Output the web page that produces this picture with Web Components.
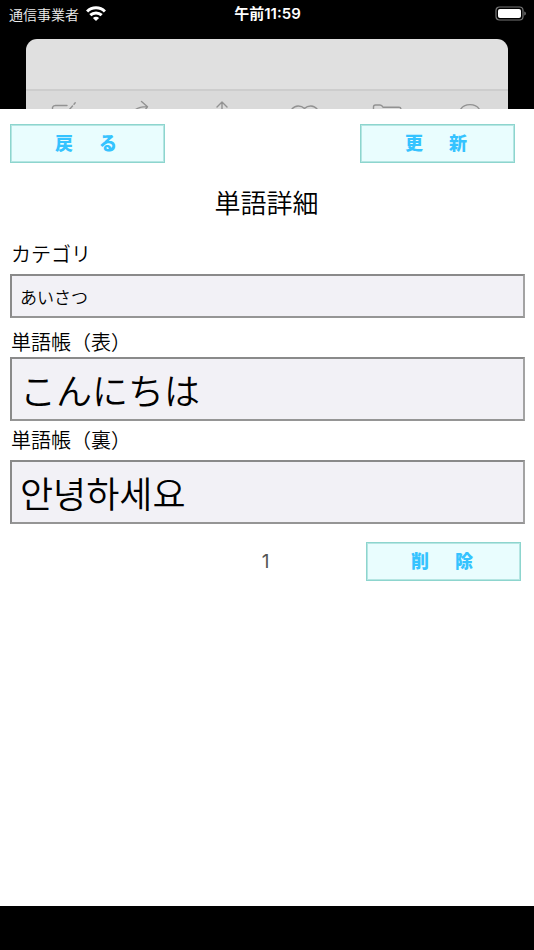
<!DOCTYPE html>
<html lang="ja">
<head>
<meta charset="utf-8">
<meta name="viewport" content="width=device-width, initial-scale=1">
<title>単語詳細</title>
<style>
  body { margin: 0; background: #000; color: #000; font-family: "Noto Sans CJK JP", "Noto Sans CJK KR", sans-serif; }
</style>
</head>
<body>
<word-app>
  <status-bar slot="status" carrier="通信事業者" time="午前11:59"></status-bar>
  <backdrop-card slot="backdrop"></backdrop-card>
  <word-detail slot="sheet"></word-detail>
</word-app>

<script>
const attach = (el, html) => {
  const t = document.createElement('template');
  t.innerHTML = html;
  el.attachShadow({ mode: 'open' }).append(t.content.cloneNode(true));
};

customElements.define('word-app', class extends HTMLElement {
  connectedCallback() {
    attach(this, `
      <style>
        :host { display: flex; flex-direction: column; min-height: 100vh; box-sizing: border-box; padding-bottom: 44px; }
        ::slotted([slot="sheet"]) { flex: 1; }
      </style>
      <slot name="status"></slot><slot name="backdrop"></slot><slot name="sheet"></slot>`);
  }
});

customElements.define('status-bar', class extends HTMLElement {
  connectedCallback() {
    attach(this, `
      <style>
        :host { display: grid; grid-template-columns: 1fr auto 1fr; align-items: center; height: 28px; padding: 0 8px 0 9px; margin-bottom: 11px; color: #fff; font-size: 14px; line-height: 28px; }
        .carrier { display: flex; align-items: center; gap: 7px; font-weight: 350; color: #eee; }
        .time { font-family: Inter, "Noto Sans CJK JP", sans-serif; font-weight: 600; font-size: 15px; }
        .battery { justify-self: end; }
        svg { display: block; }
      </style>
      <div class="carrier"><span>${this.getAttribute('carrier')}</span>
        <svg width="20" height="16" viewBox="0 0 20 16" fill="none" stroke="#fff" stroke-width="3" aria-hidden="true">
          <path d="M1.100 5.500C6 .6 14 .6 18.900 5.500M4.300 9.200C7.500 6.100 12.500 6.100 15.700 9.200"/>
          <path d="M10 15 6.900 11.900C8.600 10.300 11.400 10.300 13.100 11.900Z" fill="#fff" stroke="none"/>
        </svg>
      </div>
      <div class="time">${this.getAttribute('time')}</div>
      <svg class="battery" width="31" height="16" viewBox="0 0 31 16" aria-hidden="true">
        <rect x="1" y="1" width="27" height="13" rx="3.5" fill="none" stroke="#777" stroke-width="1.2"/>
        <rect x="3" y="3" width="23" height="9" rx="2" fill="#fff"/>
        <path d="M29.3 5.5C31.3 6 31.3 9 29.3 9.5Z" fill="#777"/>
      </svg>`);
  }
});

customElements.define('backdrop-card', class extends HTMLElement {
  connectedCallback() {
    const icons = [
      'M2.5 18.500V16.500Q3 14.500 5.500 14.500H17M19 19 22.500 15M24 13.200 25.200 11.800',
      'M4.500 18.500C8 16 11 15.500 16 15.600M10.500 10.500 16.500 15.800 14 19',
      'M10 11V19M5 16 10 11 15 16',
      'M-2 18C1 14 7 14 10.500 17.500C14 14 20 14 23 18',
      'M-1.500 19V16Q-1.500 14 .5 14H5Q7 14 8 16.300H24Q26 16.300 26 18.500',
      'M4.500 18.500C8.500 12 19.500 12 23.500 18.500'
    ].map(d => `<svg width="28" height="18" viewBox="0 0 28 18" aria-hidden="true"><path d="${d}"/></svg>`).join('');
    attach(this, `
      <style>
        :host { display: block; margin: 0 26px; border-radius: 11px 11px 0 0; overflow: hidden; background: #e0e0e0; }
        .head { height: 50px; }
        .tools { display: flex; justify-content: space-between; padding: 0 24px; height: 18px; border-top: 2px solid #cdcdcd; background: #dadada; }
        svg { display: block; overflow: visible; fill: none; stroke: #929292; stroke-width: 1.4; stroke-linecap: round; stroke-linejoin: round; }
      </style>
      <div class="head"></div><div class="tools">${icons}</div>`);
  }
});

customElements.define('tile-button', class extends HTMLElement {
  connectedCallback() {
    attach(this, `
      <style>
        :host { display: block; }
        button { display: flex; align-items: center; justify-content: center; gap: 26px; box-sizing: border-box; width: 155px; height: 39px; margin: 0; padding: 0 3px 3px 0; border: 1px solid #8dd5ce; box-shadow: inset 0 0 0 1px #b5e6e3; border-radius: 0; background: #e9fdfe; color: #35c3ff; font: 900 18px/24px "Noto Sans CJK JP", sans-serif; cursor: pointer; }
      </style>
      <button type="button" aria-label="${this.getAttribute('label')}">${[...this.getAttribute('label')].map(c => `<span>${c}</span>`).join('')}</button>`);
  }
});

customElements.define('word-field', class extends HTMLElement {
  connectedCallback() {
    attach(this, `
      <style>
        :host { display: block; --size: 17px; --height: 44px; }
        :host([large]) { --size: 36px; --height: 64px; }
        label { display: block; padding-left: 1px; font-size: 20px; line-height: 30px; font-weight: 350; }
        :host([loose]) label { padding-bottom: 5px; }
        input { display: block; box-sizing: border-box; width: 100%; height: var(--height); margin: 0; padding: 0 8px; border: 2px solid; border-color: #8a8a8a #a3a3a3 #959595 #8a8a8a; border-radius: 0; background: #f2f1f6; color: #000; font: 350 var(--size) "Noto Sans CJK JP", "Noto Sans CJK KR", sans-serif; outline: none; }
        :host([lang="ko"]) input { font-family: "Noto Sans CJK KR", "Noto Sans CJK JP", sans-serif; }
      </style>
      <label for="f">${this.getAttribute('label')}</label>
      <input id="f" type="text" value="${this.getAttribute('value')}">`);
  }
});

customElements.define('word-detail', class extends HTMLElement {
  connectedCallback() {
    attach(this, `
      <style>
        :host { display: block; background: #fff; padding: 15px 9px 0 10px; }
        .top { display: flex; justify-content: space-between; padding-right: 10px; }
        h1 { margin: 19px 2px 17px 0; text-align: center; font-size: 26px; line-height: 40px; font-weight: 350; }
        word-field + word-field { margin-top: 9px; }
        word-field + word-field[loose] { margin-top: 4px; }
        .foot { display: grid; grid-template-columns: 1fr auto 1fr; align-items: center; margin-top: 18px; padding-right: 4px; }
        .foot span { grid-column: 2; font: 400 19px/24px Inter, sans-serif; color: #555; }
        .foot tile-button { justify-self: end; }
      </style>
      <div class="top"><tile-button label="戻る"></tile-button><tile-button label="更新"></tile-button></div>
      <h1>単語詳細</h1>
      <word-field loose label="カテゴリ" value="あいさつ"></word-field>
      <word-field large label="単語帳（表）" value="こんにちは"></word-field>
      <word-field large loose lang="ko" label="単語帳（裏）" value="안녕하세요"></word-field>
      <div class="foot"><span>1</span><tile-button label="削除"></tile-button></div>`);
  }
});
</script>
</body>
</html>
